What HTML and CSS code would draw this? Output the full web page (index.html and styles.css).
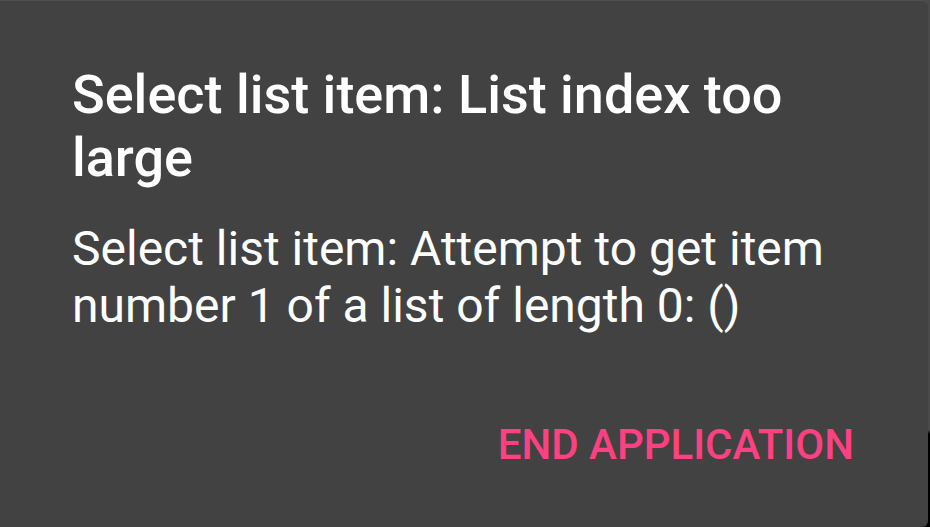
FILE: index.html
```html
<!DOCTYPE html>
<html>
<head>
<meta charset="utf-8">
<link rel="stylesheet" href="styles.css">
</head>
<body>
<div class="dialog">
  <h1 class="title">Select list item: List index too large</h1>
  <p class="message">Select list item: Attempt to get item number 1 of a list of length 0: ()</p>
  <div class="actions">
    <span class="button">END APPLICATION</span>
  </div>
</div>
</body>
</html>
```
FILE: styles.css
```css
html, body {
  margin: 0;
  padding: 0;
  width: 930px;
  height: 527px;
  overflow: hidden;
}
body {
  background: linear-gradient(to bottom, #4a4a4a 0, #4a4a4a 430px, #000 434px, #000 100%);
}
.dialog {
  box-sizing: border-box;
  width: 928px;
  height: 527px;
  background: #424242;
  border-top: 1px solid #505050;
  border-radius: 0 6px 6px 0;
  padding: 62px 74px 0 72px;
  font-family: Roboto, "Noto Sans", sans-serif;
  color: #fff;
  display: flex;
  flex-direction: column;
}
.title {
  margin: 0;
  font-size: 54px;
  font-weight: 500;
  line-height: 63px;
}
.message {
  margin: 31px 0 0 0;
  font-size: 48px;
  font-weight: 400;
  line-height: 57px;
}
.actions {
  margin-top: 86px;
  display: flex;
  justify-content: flex-end;
}
.button {
  font-size: 42px;
  font-weight: 500;
  line-height: 50px;
  color: #ff4081;
}
```
